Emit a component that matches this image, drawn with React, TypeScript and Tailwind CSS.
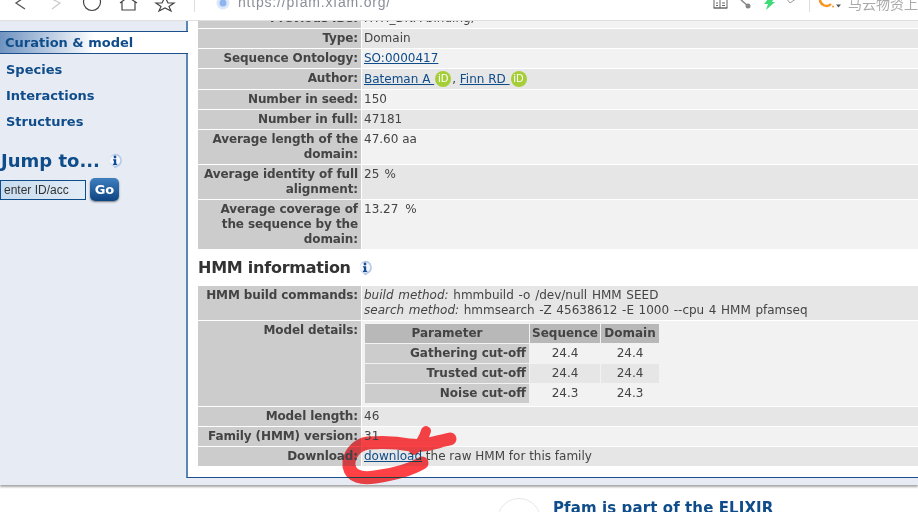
const labelCls = "w-[163px] shrink-0 bg-[#cccccc] px-[3px] py-[2px] text-right font-bold tracking-[-0.1px] text-[#444444]";
const linkCls = "text-[#0f4c8a] underline";

function InfoIcon({ className }: { className: string }) {
  return (
    <svg viewBox="0 0 16 16" className={className}>
      <path d="M8 .8a6.8 6.8 0 0 1 3.4 12.7L8 15.6l-1.5-2.2A6.8 6.8 0 0 1 8 .8z" fill="#b7cbe8" />
      <circle cx="8" cy="7.4" r="5.2" fill="#f4f7fc" />
      <circle cx="8" cy="4" r="1.4" fill="#154a96" />
      <path d="M6 6.2h3.2v4.6h1v1.3H5.9v-1.3h1V7.5H6z" fill="#154a96" />
    </svg>
  );
}

function Orcid() {
  return (
    <span className="mx-[1px] inline-flex h-[16px] w-[16px] items-center justify-center rounded-full bg-[#a6ce39] align-[1px] text-[10px] leading-none text-white">
      iD
    </span>
  );
}

function Row({ label, shade, children }: { label: string; shade: boolean; children: React.ReactNode }) {
  return (
    <div className="flex gap-px">
      <div className={labelCls}>{label}</div>
      <div className={`flex-1 px-[2px] py-[2px] text-[#444444] ${shade ? "bg-[#e6e6e6]" : "bg-[#f2f2f2]"}`}>{children}</div>
    </div>
  );
}

function CutoffRow({ name, seq, dom, shade }: { name: string; seq: string; dom: string; shade: boolean }) {
  return (
    <div className="flex gap-px">
      <div className="h-[19px] w-[164px] bg-[#cccccc] px-[3px] py-[2px] text-right font-bold text-[#444444]">{name}</div>
      <div className={`h-[19px] w-[70px] py-[2px] text-center ${shade ? "bg-[#e6e6e6]" : ""}`}>{seq}</div>
      <div className={`h-[19px] w-[58px] py-[2px] text-center ${shade ? "bg-[#e6e6e6]" : ""}`}>{dom}</div>
    </div>
  );
}

function BrowserBar() {
  return (
    <div className="relative flex h-[21px] shrink-0 items-start border-b border-[#e0e0e0] bg-white">
      <svg width="200" height="20" viewBox="0 0 200 20" fill="none" className="shrink-0">
        <path d="M25 -3 L16 3 L25 9" stroke="#555" strokeWidth="1.3" />
        <path d="M52 -1 L60 3 L52 9" stroke="#ccc" strokeWidth="1.3" />
        <circle cx="92" cy="2" r="8.5" stroke="#444" strokeWidth="1.2" />
        <path d="M120 3 L128 -3 L137 3 M122 2 V10 H135 V2" stroke="#444" strokeWidth="1.2" />
        <path d="M165 -3 L168 3 L174 3 L169 6.5 L171 11 L165 8 L159 11 L161 6.5 L156 3 L162 3 Z" stroke="#444" strokeWidth="1.2" />
        <path d="M194.5 0 V12" stroke="#dddddd" />
      </svg>
      <svg width="20" height="20" viewBox="0 0 20 20" className="ml-[14px] shrink-0">
        <circle cx="9" cy="3" r="6.5" fill="#dbe7fb" />
        <circle cx="9" cy="3" r="3.5" fill="#8fb4f0" />
      </svg>
      <span className="ml-[4px] mt-[-7px] whitespace-nowrap font-['Liberation_Sans',sans-serif] text-[14px] leading-[18px] tracking-[0.8px] text-[#8a8f99]">
        https://pfam.xfam.org/
      </span>
      <svg width="130" height="20" viewBox="0 0 130 20" fill="none" className="absolute left-[710px] top-0">
        <path d="M4 0 V8 H10 V0 M10 8 H17 V0 M3.5 8 H17.5 M6 3 H8 M12 3 H15 M6 5.5 H8 M12 5.5 H15" stroke="#666" strokeWidth="1" />
        <path d="M31 0 L38 6" stroke="#888" strokeWidth="1.5" />
        <circle cx="38" cy="6" r="2.5" fill="#888" />
        <path d="M59 -2 H64 L62 2 H65 L56 10 L58 4 H54 Z" fill="#3ddc78" />
        <path d="M76 -2 L80 3 L87 -2" stroke="#999" strokeWidth="1" />
        <path d="M99.5 0 V12" stroke="#dddddd" />
      </svg>
      <svg width="30" height="20" viewBox="0 0 30 20" fill="none" className="absolute left-[817px] top-0">
        <path d="M3 -1 A6.5 6.5 0 0 0 14 4" stroke="#f7941d" strokeWidth="2.4" />
        <circle cx="16" cy="6.5" r="1" fill="#f7941d" />
        <path d="M19 4.5 H24 L21.5 7.5 Z" fill="#555" />
      </svg>
      <span className="absolute left-[848px] top-[-6px] whitespace-nowrap font-['Noto_Sans_CJK_SC',sans-serif] text-[14px] leading-[18px] text-[#aaaaaa]">
        马云物资上
      </span>
    </div>
  );
}

function Sidebar() {
  return (
    <div className="relative z-10 w-[186px] shrink-0 pt-[10px] text-[13px] font-bold text-[#0f4c8a]">
      <div className="mr-[-2px] flex h-[23px] items-center border-y border-[#1d4f8c] bg-gradient-to-r from-[#6f93c0] via-[#ffffff] via-50% to-white pl-[5px]">
        Curation &amp; model
      </div>
      <div className="mt-[8px] flex flex-col gap-[10px] pl-[6px] leading-[16px]">
        <div>Species</div>
        <div>Interactions</div>
        <div>Structures</div>
      </div>
      <div className="mt-[19px] flex items-center gap-[7px] pl-px">
        <span className="text-[18px] leading-[24px]">Jump to...</span>
        <InfoIcon className="h-[16px] w-[16px]" />
      </div>
      <div className="mt-[5px] flex items-center gap-[4px]">
        <div className="flex h-[20px] w-[86px] items-center border border-[#0f4c8a] bg-gradient-to-r from-[#c8dcef] to-[#e2ecf6] pl-[3px] font-['Liberation_Sans',sans-serif] text-[12px] font-normal text-[#333]">
          enter ID/acc
        </div>
        <div className="flex h-[23px] w-[29px] items-center justify-center rounded-[5px] bg-gradient-to-b from-[#3f7fc0] to-[#0d4482] text-[13px] text-white shadow-[0_1px_2px_rgba(0,0,0,0.5)]">
          Go
        </div>
      </div>
    </div>
  );
}

function Content() {
  return (
    <div className="h-[457px] flex-1 border-b border-l-2 border-b-[#1d4f8c] border-l-[#5b85b5] bg-white pl-[10px] font-['DejaVu_Sans',sans-serif] text-[12px] leading-[15px]">
      <div className="flex h-[7px] items-end gap-px overflow-hidden">
        <div className={labelCls}>Previous IDs:</div>
        <div className="flex-1 bg-[#f2f2f2] px-[2px] py-[2px] text-[#444444]">HTH_DNA-binding;</div>
      </div>
      <div className="mt-px flex flex-col gap-px">
        <Row label="Type:" shade>Domain</Row>
        <Row label="Sequence Ontology:" shade={false}>
          <span className={linkCls}>SO:0000417</span>
        </Row>
        <div className="flex h-[20px] gap-px">
          <div className={labelCls}>Author:</div>
          <div className="flex-1 bg-[#e6e6e6] px-[2px] py-[2px] text-[#444444]">
            <span className={linkCls}>Bateman A </span>
            <Orcid />, <span className={linkCls}>Finn RD </span>
            <Orcid />
          </div>
        </div>
        <Row label="Number in seed:" shade={false}>150</Row>
        <Row label="Number in full:" shade>47181</Row>
        <Row label="Average length of the domain:" shade={false}>47.60 aa</Row>
        <Row label="Average identity of full alignment:" shade>
          <span className="[word-spacing:1.5px]">25 %</span>
        </Row>
        <Row label="Average coverage of the sequence by the domain:" shade={false}>
          <span className="[word-spacing:3px]">13.27 %</span>
        </Row>
      </div>

      <div className="mt-[8px] flex h-[20px] items-center gap-[6px] pt-[1px]">
        <span className="text-[16px] font-bold tracking-[-0.25px] text-[#333333]">HMM information</span>
        <InfoIcon className="h-[16px] w-[16px]" />
      </div>

      <div className="mt-[9px] flex flex-col gap-px">
        <Row label="HMM build commands:" shade>
          <div className="[word-spacing:0.9px]"><em>build method:</em> hmmbuild -o /dev/null HMM SEED</div>
          <div className="[word-spacing:0.8px]"><em>search method:</em> hmmsearch -Z 45638612 -E 1000 --cpu 4 HMM pfamseq</div>
        </Row>
        <div className="flex h-[85px] gap-px">
          <div className={labelCls}>Model details:</div>
          <div className="flex-1 bg-[#f2f2f2] pl-[3px] pt-[3px] text-[#444444]">
            <div className="flex flex-col gap-px">
              <div className="flex gap-px font-bold">
                <div className="h-[19px] w-[164px] bg-[#b8b8b8] py-[2px] text-center">Parameter</div>
                <div className="h-[19px] w-[70px] bg-[#b8b8b8] py-[2px] text-center">Sequence</div>
                <div className="h-[19px] w-[58px] bg-[#b8b8b8] py-[2px] text-center">Domain</div>
              </div>
              <CutoffRow name="Gathering cut-off" seq="24.4" dom="24.4" shade={false} />
              <CutoffRow name="Trusted cut-off" seq="24.4" dom="24.4" shade />
              <CutoffRow name="Noise cut-off" seq="24.3" dom="24.3" shade={false} />
            </div>
          </div>
        </div>
        <Row label="Model length:" shade>46</Row>
        <Row label="Family (HMM) version:" shade={false}>31</Row>
        <Row label="Download:" shade>
          <span className={linkCls}>download</span> the raw HMM for this family
        </Row>
      </div>
    </div>
  );
}

export default function App() {
  return (
    <div className="relative flex h-[512px] w-[918px] flex-col overflow-hidden bg-white font-['DejaVu_Sans',sans-serif]">
      <BrowserBar />
      <div className="flex h-[464px] shrink-0 bg-[#e6ebf4] shadow-[0_2px_2px_rgba(0,0,0,0.35)]">
        <Sidebar />
        <Content />
      </div>
      <div className="flex flex-1 pl-[497px] pt-[13px]">
        <div className="h-[44px] w-[44px] shrink-0 rounded-full border border-[#e8e8e8]" />
        <div className="ml-[12px] mt-px whitespace-nowrap text-[15px] font-bold leading-[18px] tracking-[0.1px] text-[#0f4c8a]">
          Pfam is part of the ELIXIR
        </div>
      </div>
      <svg width="918" height="512" viewBox="0 0 918 512" fill="none" className="pointer-events-none absolute left-0 top-0 z-20 mix-blend-darken">
        <path
          d="M450 439 C435 442 425 447 410 445 C395 442 380 442 368 443 C355 445 348 456 349 466 C351 477 362 479 375 477 C390 475 410 470 422 463"
          stroke="#ff4045"
          strokeWidth="13"
          strokeLinecap="round"
        />
        <path d="M426 431 C424 438 420 444 414 450" stroke="#ff4045" strokeWidth="10" strokeLinecap="round" />
      </svg>
    </div>
  );
}
